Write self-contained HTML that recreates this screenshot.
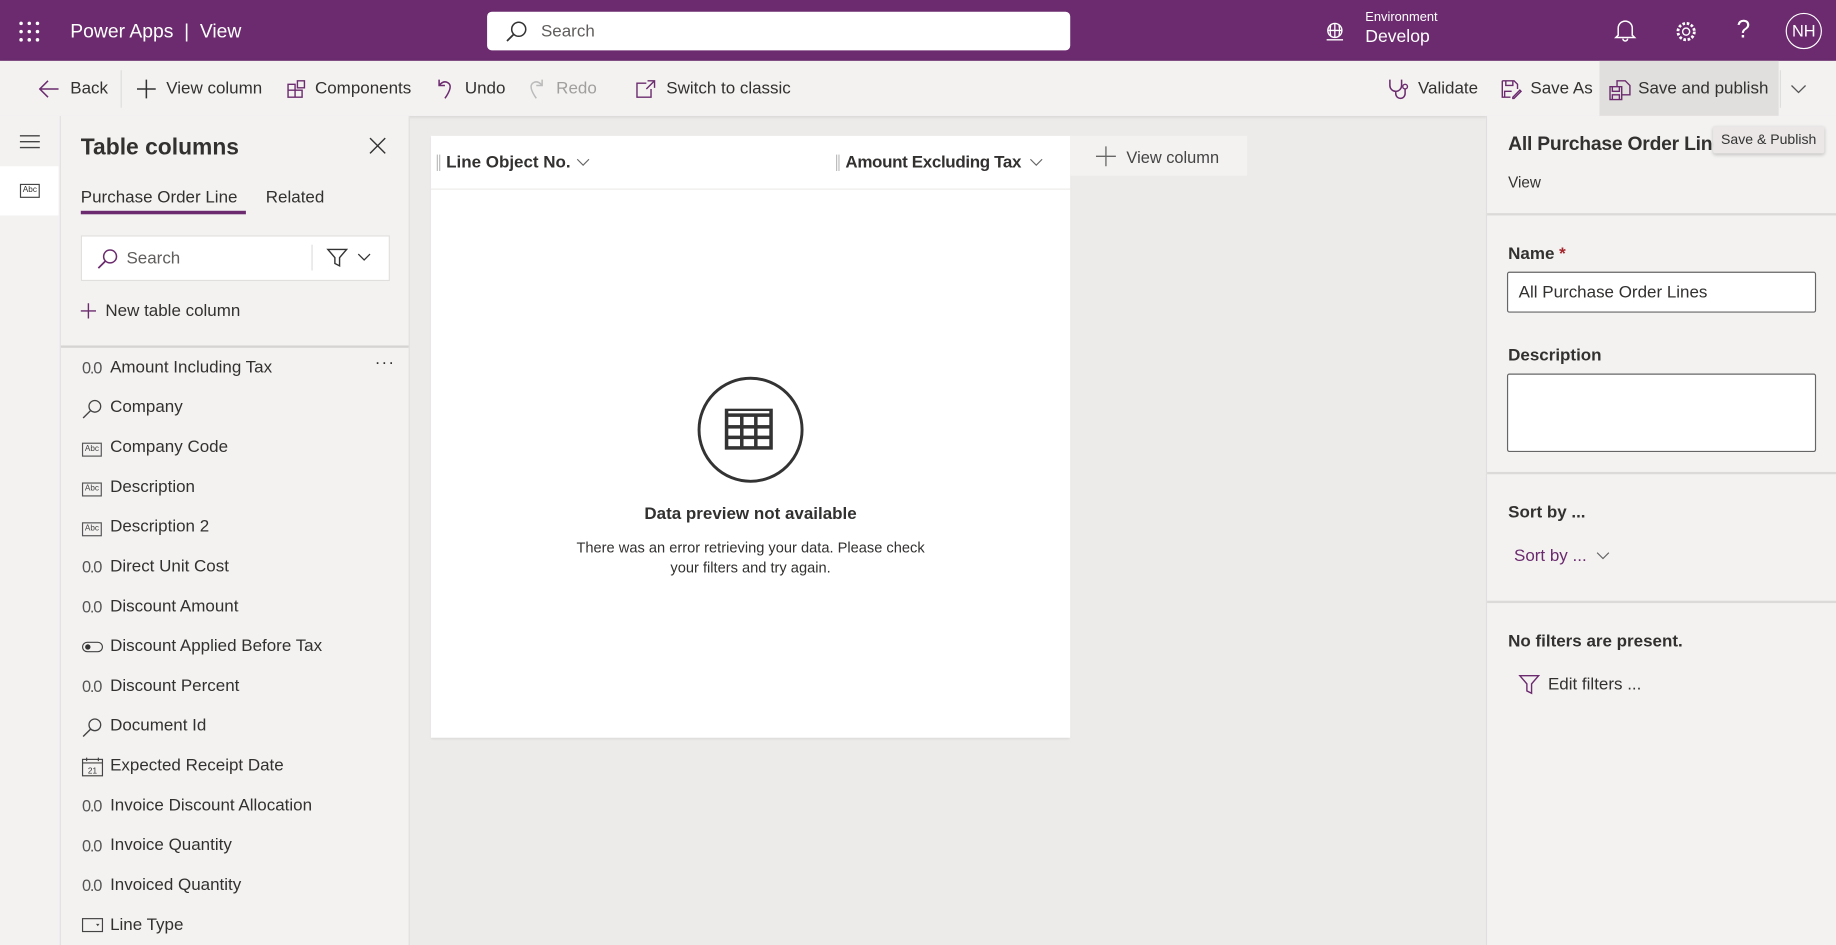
<!DOCTYPE html>
<html><head><meta charset="utf-8"><style>
html,body{margin:0;padding:0;width:1836px;height:945px;overflow:hidden;background:#edebe9;}
#w{position:absolute;left:0;top:0;width:1568px;height:807px;transform:scale(1.17092,1.1710);transform-origin:0 0;font-family:"Segoe UI","Liberation Sans",sans-serif;color:#323130;}
.a{position:absolute;white-space:nowrap;}
svg{position:absolute;overflow:visible;}
.tb{font-size:14.5px;color:#323130;top:68px;}
.li{position:absolute;left:0;font-size:14.5px;}
.li .ic{position:absolute;left:18px;top:0px;font-size:14px;color:#555;letter-spacing:-1px}
.li .t{position:absolute;left:42px;}
.abc{position:absolute;left:18px;top:4px;width:15px;height:10px;border:1px solid #555;font-size:7px;line-height:10px;text-align:center;color:#444;letter-spacing:0}
</style></head><body><div id="w">
<!-- header -->
<div class="a" style="left:0;top:0;width:1568px;height:52px;background:#6b2b6e"></div>
<svg style="left:16px;top:18px" width="18" height="18"><g fill="#fff"><circle cx="2" cy="2" r="1.5"/><circle cx="9" cy="2" r="1.5"/><circle cx="16" cy="2" r="1.5"/><circle cx="2" cy="9" r="1.5"/><circle cx="9" cy="9" r="1.5"/><circle cx="16" cy="9" r="1.5"/><circle cx="2" cy="16" r="1.5"/><circle cx="9" cy="16" r="1.5"/><circle cx="16" cy="16" r="1.5"/></g></svg>
<div class="a" style="left:60px;top:18px;font-size:16.5px;color:#fff">Power Apps &nbsp;|&nbsp; View</div>
<div class="a" style="left:416px;top:10px;width:498px;height:33px;background:#fff;border-radius:4px"></div>
<svg style="left:432px;top:18px" width="18" height="18"><circle cx="11" cy="7" r="6" fill="none" stroke="#333" stroke-width="1.3"/><path d="M7 11 L1 17" stroke="#333" stroke-width="1.5"/></svg>
<div class="a" style="left:462px;top:19px;font-size:14.5px;color:#605e5c">Search</div>
<svg style="left:1131px;top:18px" width="18" height="18"><circle cx="9" cy="8" r="6" fill="none" stroke="#fff" stroke-width="1.2"/><path d="M3 8h12M9 2v12M5.5 3.5q-1 4.5 0 9M12.5 3.5q1 4.5 0 9M2 16h14" stroke="#fff" stroke-width="1.1" fill="none"/></svg>
<div class="a" style="left:1166px;top:9px;font-size:11px;color:#fff">Environment</div>
<div class="a" style="left:1166px;top:23px;font-size:15px;color:#fff">Develop</div>
<svg style="left:1379px;top:16px" width="18" height="20"><path d="M3 14V8a6 6 0 0 1 12 0v6l2 2H1z M7 17a2 2 0 0 0 4 0" fill="none" stroke="#fff" stroke-width="1.3"/></svg>
<svg style="left:1430px;top:17px" width="20" height="20"><circle cx="10" cy="10" r="3" fill="none" stroke="#fff" stroke-width="1.2"/><circle cx="10" cy="10" r="7" fill="none" stroke="#fff" stroke-width="2.4" stroke-dasharray="2.2 1.5"/></svg>
<div class="a" style="left:1483px;top:14px;font-size:21px;color:#fff;font-weight:300">?</div>
<div class="a" style="left:1525px;top:11px;width:29px;height:29px;border:1.3px solid #fff;border-radius:50%;color:#fff;font-size:14px;text-align:center;line-height:29px">NH</div>
<!-- toolbar -->
<div class="a" style="left:0;top:52px;width:1568px;height:47px;background:#f3f2f1;box-shadow:0 1px 3px rgba(0,0,0,.1)"></div>
<div class="a" style="left:1366px;top:52px;width:153px;height:47px;background:#e1dfdd"></div>
<div class="a" style="left:1520px;top:60px;width:1px;height:32px;background:#ddd"></div>
<div class="a" style="left:103px;top:60px;width:1px;height:32px;background:#ddd"></div>
<svg style="left:33px;top:68px" width="18" height="16"><path d="M17 8H2M8 1L1 8l7 7" fill="none" stroke="#6b2b6e" stroke-width="1.3"/></svg>
<div class="a tb" style="left:60px">Back</div>
<svg style="left:117px;top:68px" width="16" height="16"><path d="M8 0v16M0 8h16" stroke="#333" stroke-width="1.3"/></svg>
<div class="a tb" style="left:142px">View column</div>
<svg style="left:245px;top:68px" width="16" height="16"><path d="M1 4h6v11H1zM1 9h6M7 9h6v6H7M9 1h6v6H9z" fill="none" stroke="#6b2b6e" stroke-width="1.2"/></svg>
<div class="a tb" style="left:269px">Components</div>
<svg style="left:373px;top:67px" width="14" height="18"><path d="M2 1v5h5M2 6q4-5 8-2t-3 13" fill="none" stroke="#6b2b6e" stroke-width="1.3"/></svg>
<div class="a tb" style="left:397px">Undo</div>
<svg style="left:451px;top:67px" width="14" height="18"><path d="M12 1v5H7M12 6q-4-5-8-2t3 13" fill="none" stroke="#bbb" stroke-width="1.3"/></svg>
<div class="a tb" style="left:475px;color:#a19f9d">Redo</div>
<svg style="left:543px;top:68px" width="17" height="16"><path d="M9 3H1v12h12V8M10 1h6v6M16 1l-7 7" fill="none" stroke="#6b2b6e" stroke-width="1.2"/></svg>
<div class="a tb" style="left:569px">Switch to classic</div>
<svg style="left:1185px;top:67px" width="20" height="18"><path d="M2 1v5a5 5 0 0 0 10 0V1M7 11v2a4 4 0 0 0 8 0v-4" fill="none" stroke="#6b2b6e" stroke-width="1.3"/><circle cx="15" cy="7" r="2" fill="none" stroke="#6b2b6e" stroke-width="1.2"/></svg>
<div class="a tb" style="left:1211px">Validate</div>
<svg style="left:1282px;top:68px" width="18" height="17"><path d="M1 1h10l3 3v4M1 1v14h7M4 1v4h6V1M3 15v-5h6" fill="none" stroke="#6b2b6e" stroke-width="1.2"/><path d="M10 15l6-6 1 1-6 6h-1z" fill="none" stroke="#6b2b6e" stroke-width="1.2"/></svg>
<div class="a tb" style="left:1307px">Save As</div>
<svg style="left:1374px;top:68px" width="20" height="18"><path d="M1 6h10v11H1zM3 6v4h6V6M3 17v-4h6v4M7 6V1h7l4 4v8h-7" fill="none" stroke="#6b2b6e" stroke-width="1.2"/></svg>
<div class="a tb" style="left:1399px">Save and publish</div>
<svg style="left:1529px;top:72px" width="14" height="8"><path d="M1 1l6 6 6-6" fill="none" stroke="#555" stroke-width="1.1"/></svg>
<!-- left rail -->
<div class="a" style="left:0;top:99px;width:51px;height:708px;background:#f3f2f1;border-right:1px solid #e1dfdd"></div>
<svg style="left:17px;top:115px" width="18" height="12"><path d="M0 1h17M0 6h17M0 11h17" stroke="#444" stroke-width="1.2"/></svg>
<div class="a" style="left:0;top:142px;width:50px;height:42px;background:#fff"></div>
<div class="a" style="left:17px;top:157px;width:15px;height:10px;border:1px solid #444;font-size:7px;line-height:10px;text-align:center">Abc</div>
<!-- columns panel -->
<div class="a" style="left:52px;top:99px;width:297px;height:708px;background:#f3f2f1;border-right:1px solid #e1dfdd"></div>
<div class="a" style="left:69px;top:115px;font-size:19.5px;font-weight:600">Table columns</div>
<svg style="left:316px;top:118px" width="13" height="13"><path d="M0 0l13 13M13 0L0 13" stroke="#333" stroke-width="1.2"/></svg>
<div class="a" style="left:69px;top:161px;font-size:14.5px">Purchase Order Line</div>
<div class="a" style="left:69px;top:180px;width:141px;height:3px;background:#6b2b6e"></div>
<div class="a" style="left:227px;top:161px;font-size:14.5px">Related</div>
<div class="a" style="left:69px;top:201px;width:262px;height:37px;background:#fff;border:1px solid #e1dfdd"></div>
<svg style="left:83px;top:212px" width="18" height="18"><circle cx="11" cy="7" r="5.5" fill="none" stroke="#6b2b6e" stroke-width="1.3"/><path d="M7 11L1 17" stroke="#6b2b6e" stroke-width="1.5"/></svg>
<div class="a" style="left:108px;top:213px;font-size:14.5px;color:#605e5c">Search</div>
<div class="a" style="left:266px;top:209px;width:1px;height:22px;background:#ddd"></div>
<svg style="left:279px;top:212px" width="40" height="16"><path d="M1 1h16l-6 7v7l-4-2V8z" fill="none" stroke="#333" stroke-width="1.2"/><path d="M27 5l5 5 5-5" fill="none" stroke="#333" stroke-width="1.1"/></svg>
<svg style="left:69px;top:259px" width="13" height="13"><path d="M6.5 0v13M0 6.5h13" stroke="#6b2b6e" stroke-width="1.2"/></svg>
<div class="a" style="left:90px;top:258px;font-size:14.5px">New table column</div>
<div class="a" style="left:52px;top:295px;width:297px;height:2px;background:#d6d4d2"></div>
<div class="a" style="left:52px;top:306px;width:297px;height:501px">
<div class="li" style="top:0"><span class="ic">0.0</span><span class="t">Amount Including Tax</span><span style="position:absolute;left:268px;top:-4px;letter-spacing:1px">···</span></div>
<div class="li" style="top:34px"><svg style="left:18px;top:1px" width="18" height="16"><circle cx="11" cy="6" r="5" fill="none" stroke="#444" stroke-width="1.1"/><path d="M7.5 9.5L1 16" stroke="#444" stroke-width="1.2"/></svg><span class="t">Company</span></div>
<div class="li" style="top:68px"><span class="abc">Abc</span><span class="t">Company Code</span></div>
<div class="li" style="top:102px"><span class="abc">Abc</span><span class="t">Description</span></div>
<div class="li" style="top:136px"><span class="abc">Abc</span><span class="t">Description 2</span></div>
<div class="li" style="top:170px"><span class="ic">0.0</span><span class="t">Direct Unit Cost</span></div>
<div class="li" style="top:204px"><span class="ic">0.0</span><span class="t">Discount Amount</span></div>
<div class="li" style="top:238px"><svg style="left:18px;top:4px" width="18" height="10"><rect x="0.5" y="0.5" width="17" height="8" rx="4" fill="none" stroke="#444"/><circle cx="5" cy="4.5" r="2.3" fill="#333"/></svg><span class="t">Discount Applied Before Tax</span></div>
<div class="li" style="top:272px"><span class="ic">0.0</span><span class="t">Discount Percent</span></div>
<div class="li" style="top:306px"><svg style="left:18px;top:1px" width="18" height="16"><circle cx="11" cy="6" r="5" fill="none" stroke="#444" stroke-width="1.1"/><path d="M7.5 9.5L1 16" stroke="#444" stroke-width="1.2"/></svg><span class="t">Document Id</span></div>
<div class="li" style="top:340px"><svg style="left:18px;top:1px" width="18" height="16"><rect x="0.5" y="1.5" width="17" height="14" fill="none" stroke="#444"/><path d="M0.5 4.5h17M4 0v3M14 0v3" stroke="#444"/><text x="9" y="13.5" font-size="7" text-anchor="middle" fill="#333" font-family="Liberation Sans">21</text></svg><span class="t">Expected Receipt Date</span></div>
<div class="li" style="top:374px"><span class="ic">0.0</span><span class="t">Invoice Discount Allocation</span></div>
<div class="li" style="top:408px"><span class="ic">0.0</span><span class="t">Invoice Quantity</span></div>
<div class="li" style="top:442px"><span class="ic">0.0</span><span class="t">Invoiced Quantity</span></div>
<div class="li" style="top:476px"><svg style="left:18px;top:2px" width="18" height="12"><rect x="0.5" y="0.5" width="17" height="11" fill="none" stroke="#444"/><path d="M12 5h3l-1.5 2z" fill="#444"/></svg><span class="t">Line Type</span></div>
</div>
<!-- card -->
<div class="a" style="left:368px;top:116px;width:546px;height:514px;background:#fff;box-shadow:0 1px 2px rgba(0,0,0,.08)"></div>
<div class="a" style="left:368px;top:161px;width:546px;height:1px;background:#edebe9"></div>
<div class="a" style="left:373px;top:132px;height:14px;border-left:1px solid #bbb;border-right:1px solid #bbb;width:1px"></div>
<div class="a" style="left:381px;top:131px;font-size:14.5px;font-weight:600">Line Object No.</div>
<svg style="left:492px;top:135px" width="12" height="7"><path d="M1 1l5 5 5-5" fill="none" stroke="#666"/></svg>
<div class="a" style="left:714px;top:132px;height:14px;border-left:1px solid #bbb;border-right:1px solid #bbb;width:1px"></div>
<div class="a" style="left:722px;top:131px;font-size:14.5px;font-weight:600;letter-spacing:-0.3px">Amount Excluding Tax</div>
<svg style="left:879px;top:135px" width="12" height="7"><path d="M1 1l5 5 5-5" fill="none" stroke="#666"/></svg>
<div class="a" style="left:914px;top:116px;width:151px;height:34px;background:#f3f2f1"></div>
<svg style="left:936px;top:125px" width="17" height="17"><path d="M8.5 0v17M0 8.5h17" stroke="#666" stroke-width="1.1"/></svg>
<div class="a" style="left:962px;top:126px;font-size:14px;color:#444">View column</div>
<svg style="left:595px;top:321px" width="92" height="92"><circle cx="46" cy="46" r="44" fill="none" stroke="#333" stroke-width="2.5"/><rect x="24" y="28" width="41" height="35" fill="#333"/><g fill="#fff"><rect x="27" y="30" width="35" height="2"/><rect x="27" y="35" width="10" height="7"/><rect x="40" y="35" width="9" height="7"/><rect x="52" y="35" width="10" height="7"/><rect x="27" y="45" width="10" height="6"/><rect x="40" y="45" width="9" height="6"/><rect x="52" y="45" width="10" height="6"/><rect x="27" y="54" width="10" height="6"/><rect x="40" y="54" width="9" height="6"/><rect x="52" y="54" width="10" height="6"/></g></svg>
<div class="a" style="left:368px;width:546px;top:431px;text-align:center;font-size:14.5px;font-weight:600">Data preview not available</div>
<div class="a" style="left:368px;width:546px;top:460px;text-align:center;font-size:12.5px;line-height:17px;white-space:normal">There was an error retrieving your data. Please check<br>your filters and try again.</div>
<!-- right panel -->
<div class="a" style="left:1269px;top:99px;width:299px;height:708px;background:#f3f2f1;border-left:1px solid #e1dfdd"></div>
<div class="a" style="left:1288px;top:114px;font-size:16.5px;font-weight:600;letter-spacing:-0.2px">All Purchase Order Line</div>
<div class="a" style="left:1463px;top:108px;width:95px;height:23px;background:#eae7e6;box-shadow:0 1px 3px rgba(0,0,0,.2);border-radius:2px;font-size:12px;color:#333;line-height:23px;text-align:center">Save &amp; Publish</div>
<div class="a" style="left:1288px;top:148px;font-size:13px">View</div>
<div class="a" style="left:1270px;top:182px;width:298px;height:2px;background:#dcdad8"></div>
<div class="a" style="left:1288px;top:209px;font-size:14.5px;font-weight:600">Name <span style="color:#a4262c">*</span></div>
<div class="a" style="left:1287px;top:232px;width:262px;height:33px;background:#fff;border:1px solid #666;border-radius:2px"></div>
<div class="a" style="left:1297px;top:242px;font-size:14.5px">All Purchase Order Lines</div>
<div class="a" style="left:1288px;top:296px;font-size:14.5px;font-weight:600">Description</div>
<div class="a" style="left:1287px;top:319px;width:262px;height:65px;background:#fff;border:1px solid #666;border-radius:2px"></div>
<div class="a" style="left:1270px;top:403px;width:298px;height:2px;background:#dcdad8"></div>
<div class="a" style="left:1288px;top:430px;font-size:14.5px;font-weight:600">Sort by ...</div>
<div class="a" style="left:1293px;top:467px;font-size:14.5px;color:#6b2b6e">Sort by ...</div>
<svg style="left:1363px;top:471px" width="12" height="7"><path d="M1 1l5 5 5-5" fill="none" stroke="#666"/></svg>
<div class="a" style="left:1270px;top:513px;width:298px;height:2px;background:#dcdad8"></div>
<div class="a" style="left:1288px;top:540px;font-size:14.5px;font-weight:600">No filters are present.</div>
<svg style="left:1297px;top:576px" width="18" height="17"><path d="M1 1h16l-6 7v8l-4-2V8z" fill="none" stroke="#6b2b6e" stroke-width="1.2"/></svg>
<div class="a" style="left:1322px;top:577px;font-size:14.5px">Edit filters ...</div>
</div></body></html>
